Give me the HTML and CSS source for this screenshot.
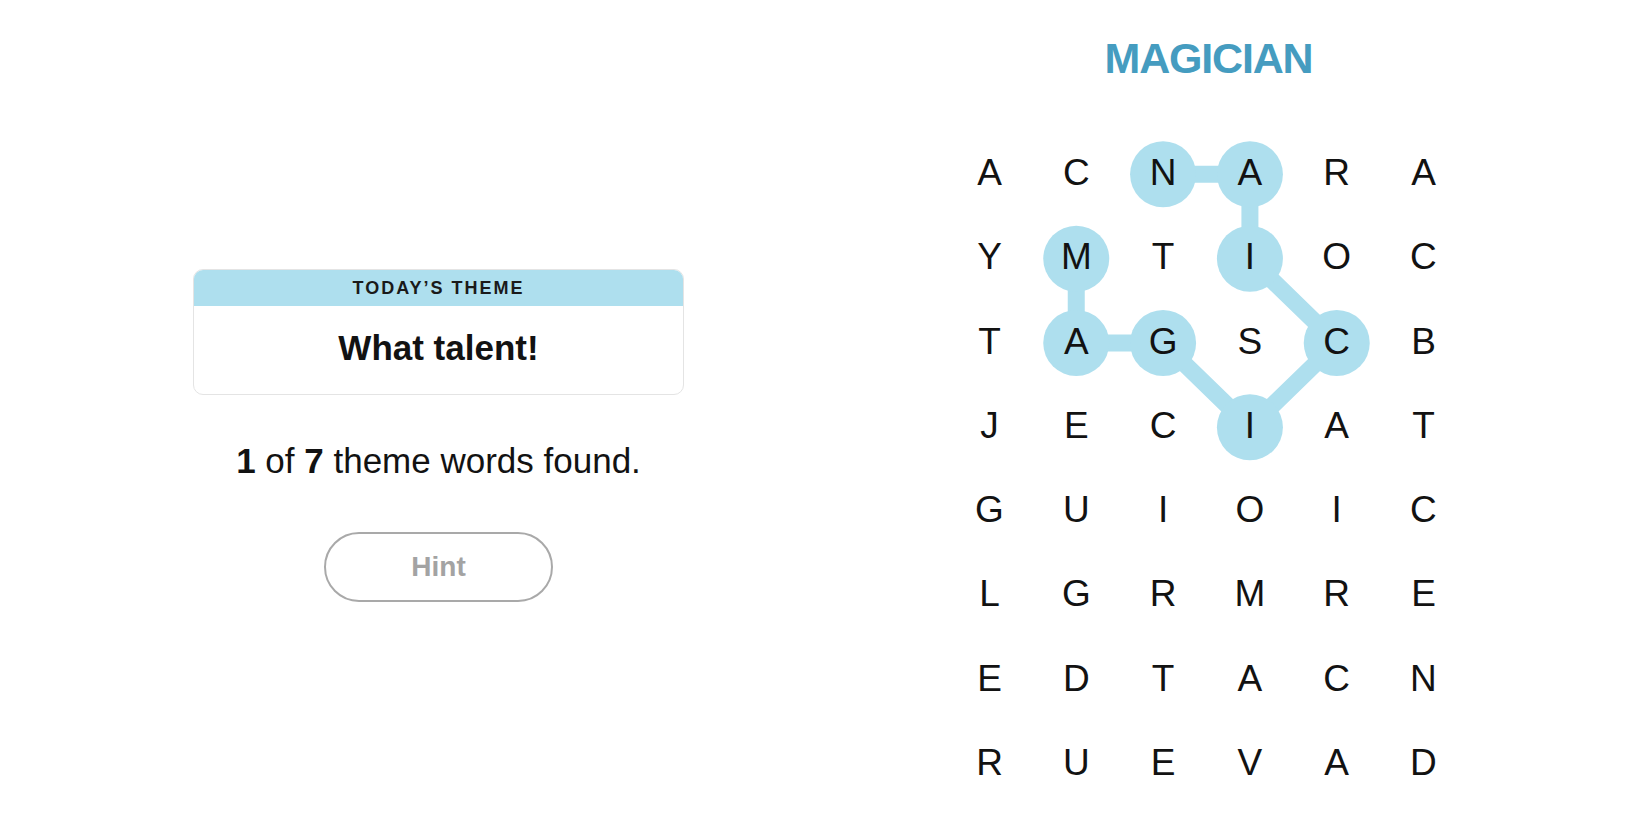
FILE: index.html
```html
<!DOCTYPE html>
<html lang="en">
<head>
<meta charset="utf-8">
<title>Strands</title>
<link rel="stylesheet" href="styles.css">
</head>
<body>
<main class="game">
  <section class="side">
    <div class="theme-card">
      <div class="theme-head">TODAY’S THEME</div>
      <div class="theme-body">What talent!</div>
    </div>
    <p class="progress"><b>1</b> of <b>7</b> theme words found.</p>
    <button class="hint" type="button">Hint</button>
  </section>
  <section class="play">
    <h1 class="word">MAGICIAN</h1>
    <div class="board">
      <svg class="trail" width="521" height="675" viewBox="0 0 520.8 674.4" aria-hidden="true">
        <polyline class="trail-line" points="130.2,127.45 130.2,211.75 217,211.75 303.8,296.05 390.6,211.75 303.8,127.45 303.8,43.15 217,43.15"/>
        <circle class="dot" cx="130.2" cy="127.45" r="33"/>
        <circle class="dot" cx="130.2" cy="211.75" r="33"/>
        <circle class="dot" cx="217" cy="211.75" r="33"/>
        <circle class="dot" cx="303.8" cy="296.05" r="33"/>
        <circle class="dot" cx="390.6" cy="211.75" r="33"/>
        <circle class="dot" cx="303.8" cy="127.45" r="33"/>
        <circle class="dot" cx="303.8" cy="43.15" r="33"/>
        <circle class="dot" cx="217" cy="43.15" r="33"/>
      </svg>
      <div class="grid">
        <span>A</span><span>C</span><span>N</span><span>A</span><span>R</span><span>A</span>
        <span>Y</span><span>M</span><span>T</span><span>I</span><span>O</span><span>C</span>
        <span>T</span><span>A</span><span>G</span><span>S</span><span>C</span><span>B</span>
        <span>J</span><span>E</span><span>C</span><span>I</span><span>A</span><span>T</span>
        <span>G</span><span>U</span><span>I</span><span>O</span><span>I</span><span>C</span>
        <span>L</span><span>G</span><span>R</span><span>M</span><span>R</span><span>E</span>
        <span>E</span><span>D</span><span>T</span><span>A</span><span>C</span><span>N</span>
        <span>R</span><span>U</span><span>E</span><span>V</span><span>A</span><span>D</span>
      </div>
    </div>
  </section>
</main>
</body>
</html>
```

FILE: styles.css
```css
* {
  box-sizing: border-box;
}

html, body {
  margin: 0;
  padding: 0;
  background: #ffffff;
}

body {
  font-family: "Liberation Sans", Arial, sans-serif;
  color: #121212;
  width: 1650px;
  height: 825px;
  overflow: hidden;
}

.game {
  display: flex;
  align-items: flex-start;
  padding-left: 193px;
}

.side {
  width: 491px;
  display: flex;
  flex-direction: column;
  align-items: center;
  padding-top: 269px;
}

.theme-card {
  width: 491px;
  border: 1px solid #e4e4e4;
  border-radius: 10px;
  overflow: hidden;
  text-align: center;
}

.theme-head {
  height: 37px;
  background: #aedfee;
  font-size: 18px;
  line-height: 37px;
  font-weight: 700;
  letter-spacing: 0.11em;
  color: #1a1a1a;
  margin: -1px -1px 0;
  padding-top: 1px;
}

.theme-body {
  font-size: 35px;
  line-height: 40px;
  font-weight: 700;
  padding: 22px 0 26px;
}

.progress {
  margin: 46px 0 0;
  font-size: 35px;
  line-height: 40px;
  text-align: center;
}

.progress b {
  font-weight: 700;
}

.hint {
  margin-top: 51px;
  width: 229px;
  height: 70px;
  border: 2px solid #a9a9a9;
  border-radius: 35px;
  background: #ffffff;
  font-family: "Liberation Sans", Arial, sans-serif;
  font-size: 28px;
  font-weight: 700;
  color: #a3a3a3;
  padding: 0;
}

.play {
  margin-left: 262px;
  padding-top: 33px;
  width: 521px;
  display: flex;
  flex-direction: column;
  align-items: center;
}

.word {
  margin: 0 0 48px;
  font-size: 43px;
  line-height: 50px;
  font-weight: 700;
  letter-spacing: -1.2px;
  color: #459cc0;
  padding-left: 4px;
}

.board {
  position: relative;
  width: 520.8px;
  height: 674.4px;
}

.trail {
  position: absolute;
  left: 0;
  top: 0;
}

.trail-line {
  fill: none;
  stroke: #aedfee;
  stroke-width: 17;
  stroke-linejoin: round;
  stroke-linecap: round;
}

.dot {
  fill: #aedfee;
}

.grid {
  position: relative;
  display: grid;
  grid-template-columns: repeat(6, 86.8px);
  grid-template-rows: repeat(8, 84.3px);
}

.grid span {
  display: flex;
  align-items: center;
  justify-content: center;
  font-size: 37px;
  line-height: 84.3px;
  color: #121212;
}
```
